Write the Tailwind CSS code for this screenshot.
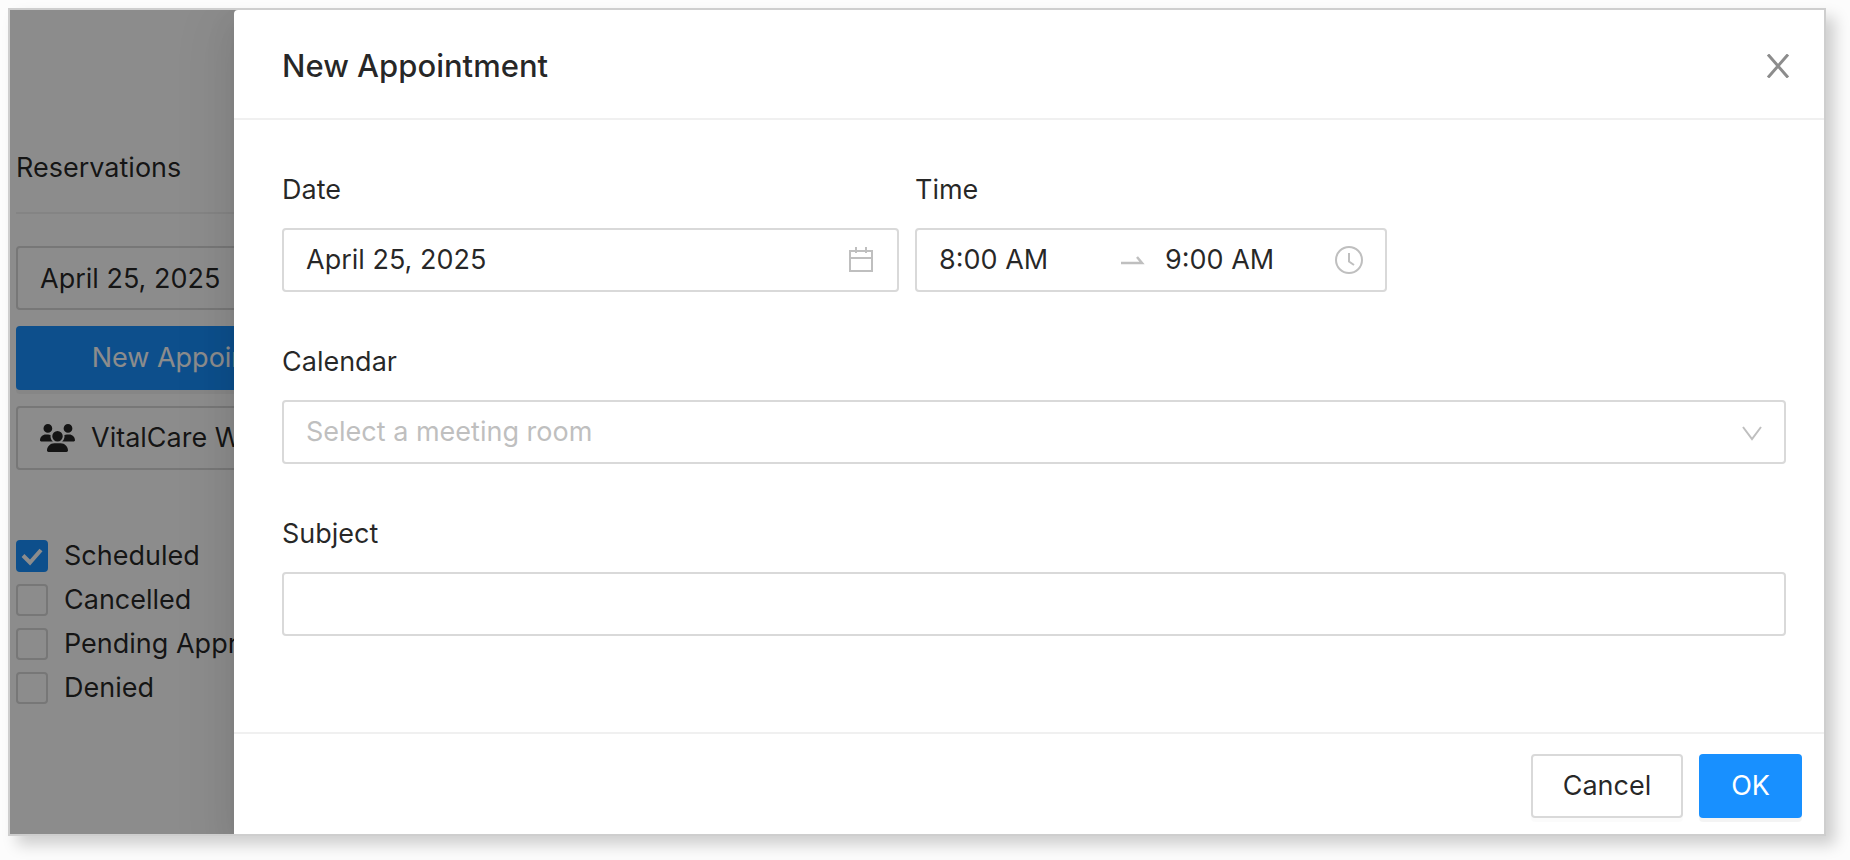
<!DOCTYPE html>
<html lang="en">
<head>
    <meta charset="UTF-8">
    <meta name="viewport" content="width=device-width, initial-scale=1.0">
    <title>New Appointment</title>
    <script src="https://cdn.jsdelivr.net/npm/@tailwindcss/browser@4"></script>
    <style>
        body {
            font-family: "Inter", "Liberation Sans", sans-serif;
        }
    </style>
</head>
<body class="min-h-screen bg-[#fcfcfc] pt-2 pr-6 pb-6 pl-2 text-[27px] leading-[44px] text-black/85">
    <div class="relative flex overflow-clip border-2 border-[#cecece] bg-white shadow-[9px_9px_14px_rgba(0,0,0,0.18)]">

        <!-- Reservations sidebar, behind the mask -->
        <aside class="w-56 shrink-0 overflow-hidden pl-[6px] pt-[136px]">
            <div class="w-[380px]">
                <h2 class="border-b-2 border-[#f0f0f0] pb-[22px]">Reservations</h2>
                <input type="text" aria-label="Reservation date" value="April 25, 2025" class="mt-8 block h-16 w-full rounded-sm border-2 border-[#d9d9d9] px-[22px]">
                <button type="button" class="mt-4 block h-16 w-full rounded-sm bg-[#1890ff] text-white shadow-[0_4px_0_rgba(0,0,0,0.045)]">New Appointment</button>
                <button type="button" class="mt-4 flex h-16 w-full items-center gap-4 rounded-sm border-2 border-[#d9d9d9] px-[22px]">
                    <svg class="h-7 w-[35px]" viewBox="0 0 640 512" fill="currentColor" aria-hidden="true">
                        <path d="M144 0a80 80 0 1 1 0 160A80 80 0 1 1 144 0zM512 0a80 80 0 1 1 0 160A80 80 0 1 1 512 0zM0 298.700C0 239.800 47.800 192 106.700 192h42.700c15.900 0 31 3.500 44.600 9.700c-1.300 7.200-1.900 14.700-1.900 22.300c0 38.200 16.800 72.500 43.300 96H21.300C9.600 320 0 310.400 0 298.700zM405.300 320h-.7c26.600-23.500 43.300-57.800 43.300-96c0-7.600-.7-15-1.900-22.300c13.600-6.300 28.700-9.700 44.600-9.700h42.700C592.200 192 640 239.800 640 298.700c0 11.800-9.600 21.300-21.300 21.300H405.300zM224 224a96 96 0 1 1 192 0 96 96 0 1 1-192 0zM128 485.300C128 411.700 187.700 352 261.300 352h117.400C452.300 352 512 411.700 512 485.300c0 14.700-11.900 26.700-26.700 26.700H154.700c-14.700 0-26.700-11.900-26.700-26.700z"/>
                    </svg>
                    VitalCare Wellness
                </button>
                <div class="mt-16">
                    <label class="flex items-center gap-4">
                        <span class="relative flex">
                            <input type="checkbox" checked class="h-8 w-8 appearance-none rounded-sm border-2 border-[#d9d9d9] checked:border-[#1890ff] checked:bg-[#1890ff]">
                            <svg class="absolute inset-0 h-8 w-8" viewBox="0 0 32 32" fill="none" stroke="white" stroke-width="4" aria-hidden="true">
                                <path d="M7 15.500l7 7L25 10"/>
                            </svg>
                        </span>
                        Scheduled
                    </label>
                    <label class="flex items-center gap-4">
                        <input type="checkbox" class="h-8 w-8 appearance-none rounded-sm border-2 border-[#d9d9d9]">
                        Cancelled
                    </label>
                    <label class="flex items-center gap-4">
                        <input type="checkbox" class="h-8 w-8 appearance-none rounded-sm border-2 border-[#d9d9d9]">
                        Pending Approval
                    </label>
                    <label class="flex items-center gap-4">
                        <input type="checkbox" class="h-8 w-8 appearance-none rounded-sm border-2 border-[#d9d9d9]">
                        Denied
                    </label>
                </div>
            </div>
        </aside>
        <div class="absolute inset-0 bg-black/45"></div>

        <!-- Dialog -->
        <div role="dialog" aria-labelledby="dialog-title" class="relative flex-1 rounded-tl-sm bg-white shadow-[0_6px_12px_-8px_rgba(0,0,0,0.12),0_12px_32px_rgba(0,0,0,0.08),0_18px_56px_16px_rgba(0,0,0,0.05)]">
            <header class="flex items-center justify-between border-b-2 border-[#f0f0f0] pt-[34px] pr-[34px] pb-[30px] pl-12">
                <h1 id="dialog-title" class="text-[31px] font-medium">New Appointment</h1>
                <button type="button" aria-label="Close" class="text-black/45">
                    <svg class="h-6 w-6" viewBox="0 0 24 24" fill="none" stroke="currentColor" stroke-width="3" aria-hidden="true">
                        <path d="M2 0.500L22 23.500M22 0.500L2 23.500"/>
                    </svg>
                </button>
            </header>

            <form class="flex flex-col gap-12 py-12 pr-[38px] pl-12">
                <div class="flex gap-4">
                    <div class="w-[617px]">
                        <label for="date" class="block pb-4">Date</label>
                        <div class="flex h-16 items-center rounded-sm border-2 border-[#d9d9d9] px-[22px]">
                            <input id="date" type="text" value="April 25, 2025" class="min-w-0 flex-1 outline-none">
                            <svg class="h-7 w-7" viewBox="0 0 28 28" fill="none" stroke="#bfbfbf" stroke-width="2" aria-hidden="true">
                                <path d="M3 5h22v20H3zM3 12h22M9 1v6M19 1v6"/>
                            </svg>
                        </div>
                    </div>
                    <div class="w-[472px]">
                        <label for="start" class="block pb-4">Time</label>
                        <div class="flex h-16 items-center rounded-sm border-2 border-[#d9d9d9] px-[22px]">
                            <input id="start" type="text" value="8:00 AM" class="min-w-0 flex-1 outline-none">
                            <svg class="mx-4 h-8 w-8" viewBox="0 0 32 32" fill="none" stroke="#bfbfbf" stroke-width="2.500" aria-hidden="true">
                                <path d="M4 19h21l-5-6"/>
                            </svg>
                            <input type="text" aria-label="End time" value="9:00 AM" class="min-w-0 flex-1 outline-none">
                            <svg class="ml-2 h-7 w-7" viewBox="0 0 28 28" fill="none" stroke="#bfbfbf" stroke-width="2" aria-hidden="true">
                                <circle cx="14" cy="14" r="13"/>
                                <path d="M14 7v8.500l5 3.500"/>
                            </svg>
                        </div>
                    </div>
                </div>

                <div>
                    <label for="calendar" class="block pb-4">Calendar</label>
                    <div class="relative">
                        <select id="calendar" class="block h-16 w-full appearance-none rounded-sm border-2 border-[#d9d9d9] px-[22px] text-[#bfbfbf]">
                            <option>Select a meeting room</option>
                        </select>
                        <svg class="pointer-events-none absolute top-5 right-[22px] h-6 w-6" viewBox="0 0 24 24" fill="none" stroke="#bfbfbf" stroke-width="2" aria-hidden="true">
                            <path d="M3 7l9 12 9-12"/>
                        </svg>
                    </div>
                </div>

                <div>
                    <label for="subject" class="block pb-4">Subject</label>
                    <input id="subject" type="text" class="block h-16 w-full rounded-sm border-2 border-[#d9d9d9] px-[22px]">
                </div>
                <div></div>
            </form>

            <footer class="flex justify-end gap-4 border-t-2 border-[#f0f0f0] pt-5 pr-[22px] pb-4">
                <button type="button" class="h-16 rounded-sm border-2 border-[#d9d9d9] px-[30px] shadow-[0_4px_0_rgba(0,0,0,0.016)]">Cancel</button>
                <button type="button" class="h-16 rounded-sm bg-[#1890ff] px-8 text-white shadow-[0_4px_0_rgba(0,0,0,0.045)]">OK</button>
            </footer>
        </div>
    </div>
</body>
</html>
